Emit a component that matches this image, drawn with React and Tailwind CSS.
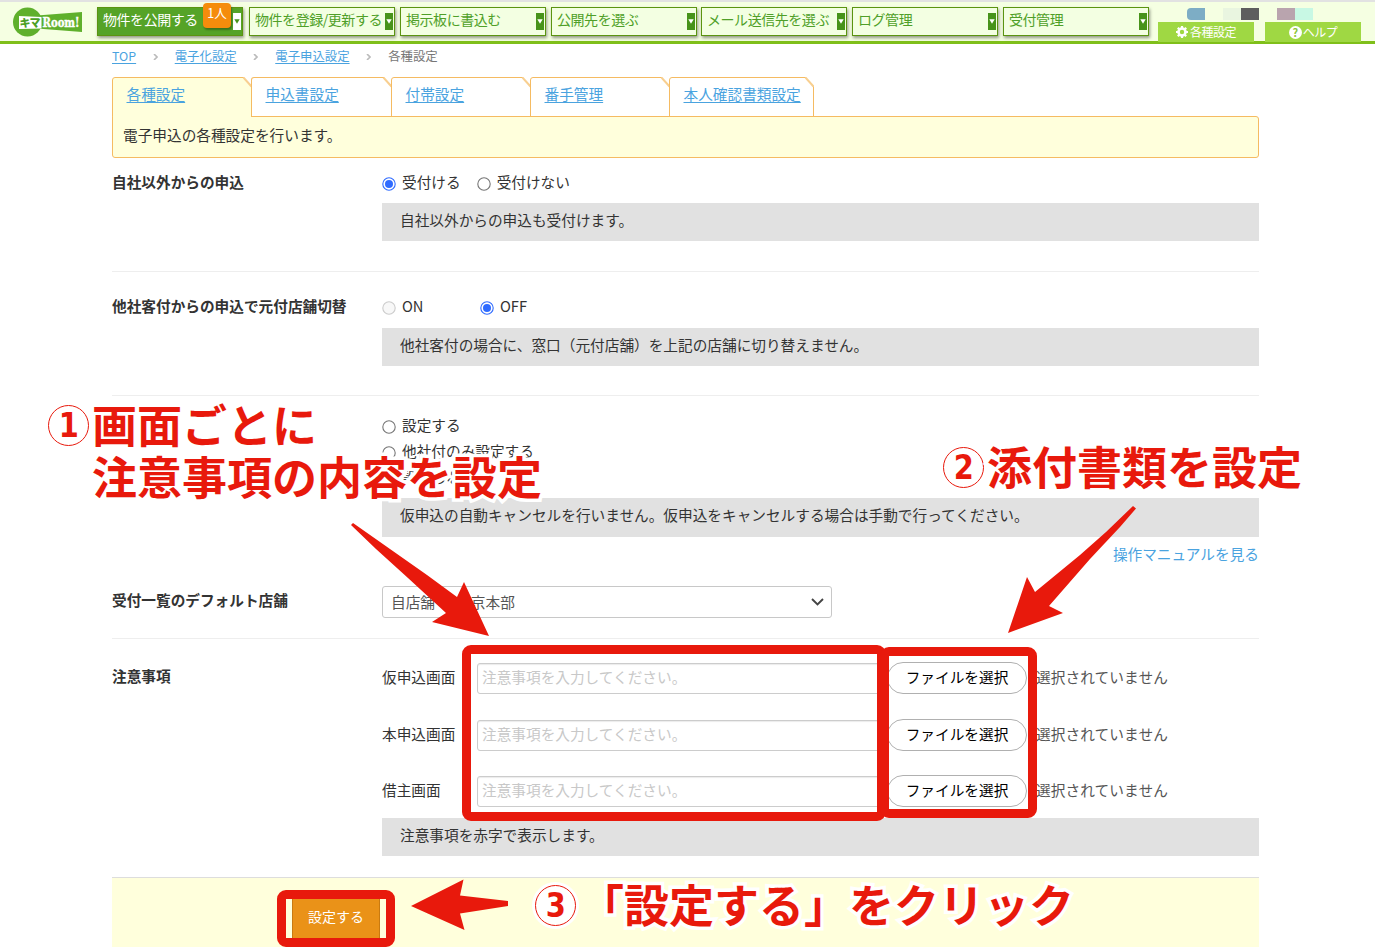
import React from "react";

const NAV = [
  { label: "物件を公開する", ml: "ml-[15px]", active: true },
  { label: "物件を登録/更新する", ml: "ml-[6px]" },
  { label: "掲示板に書込む", ml: "ml-[5px]" },
  { label: "公開先を選ぶ", ml: "ml-[5px]" },
  { label: "メール送信先を選ぶ", ml: "ml-[4px]" },
  { label: "ログ管理", ml: "ml-[5px]" },
  { label: "受付管理", ml: "ml-[5px]" },
];

function Logo() {
  return (
    <svg width="70" height="30" viewBox="0 0 70 30" className="block">
      <circle cx="14.500" cy="15" r="14.500" fill="#5fb02c" />
      <path d="M24 8.500 L69 5 V25 L24 21.500 Z" fill="#5fb02c" />
      <path d="M6 9 L28.500 10 V21.500 L6 22 Z" fill="#fff" />
      <text x="6.500" y="20" fontSize="11" fontWeight="900" fill="#4ba024" textLength="21" fontFamily="Noto Sans CJK JP, sans-serif">キマ</text>
      <text x="29.500" y="19.500" fontSize="12.500" fontWeight="700" fill="#fff" stroke="#fff" strokeWidth=".4" textLength="37" lengthAdjust="spacingAndGlyphs" fontFamily="DejaVu Serif, serif">Room!</text>
    </svg>
  );
}

function NavButton({ label, ml, active }) {
  return (
    <div
      className={
        "relative flex h-[29px] w-[146px] shrink-0 items-center border border-[#5b9410] pl-[5px] text-[14px] shadow-[1px_2px_3px_rgba(0,0,0,0.4)] " +
        ml +
        (active ? " bg-[#55a327] text-white" : " bg-[#f3ffe2] text-[#4f9f28]")
      }
    >
      <span className="-mt-[5px] grow whitespace-nowrap tracking-[-0.45px]">{label}</span>
      <span className={"mr-px flex h-[17px] w-[8px] shrink-0 items-center justify-center " + (active ? "bg-white" : "bg-[#47931a]")}>
        <svg width="6" height="5" viewBox="0 0 6 5">
          <path d="M.3 .3 H5.700 L3 4.700 Z" fill={active ? "#47931a" : "#fff"} />
        </svg>
      </span>
      {active && (
        <span className="absolute top-[-5px] left-[105px] flex h-[25px] w-[28px] items-center justify-center rounded-[4px] bg-[#f58c0c] pb-[4px] text-[12.5px] shadow-[1px_2px_2px_rgba(0,0,0,0.3)]">
          1人
        </span>
      )}
    </div>
  );
}

function Gear() {
  return (
    <svg width="12" height="12" viewBox="0 0 12 12">
      <circle cx="6" cy="6" r="3.500" fill="none" stroke="#fff" strokeWidth="2.600" />
      <g stroke="#fff" strokeWidth="2.200">
        <path d="M6 0V2M6 10V12M0 6H2M10 6H12M1.800 1.800L3 3M9 9L10.200 10.200M10.200 1.800L9 3M3 9L1.800 10.200" />
      </g>
    </svg>
  );
}

function Header() {
  return (
    <header className="flex h-[44px] border-t-2 border-b-[3px] border-t-[#e2e2e2] border-b-[#7fbf1a] bg-[#f5ffe2]">
      <div className="ml-[13px] w-[69px] shrink-0 pt-[5px]">
        <Logo />
      </div>
      <nav className="flex pt-[5px]">
        {NAV.map((n) => (
          <NavButton key={n.label} {...n} />
        ))}
      </nav>
      <div className="ml-[9px] flex gap-[11px]">
        <div className="w-[96px]">
          <div className="flex h-[20px] pt-[6px] pl-[29px]">
            <i className="h-[12px] w-[18px] shrink-0 rounded-l-[4px] bg-[#7dadc5]" />
            <i className="ml-[18px] h-[12px] w-[18px] shrink-0 bg-[#e9f5e0]" />
            <i className="h-[12px] w-[18px] shrink-0 bg-[#5e5e5e]" />
          </div>
          <div className="flex h-[20px] items-center justify-center gap-[2px] bg-[#9fd843] text-[12px] text-white">
            <Gear />
            <span className="tracking-[-0.5px]">各種設定</span>
          </div>
        </div>
        <div className="w-[96px]">
          <div className="flex h-[20px] pt-[6px] pl-[12px]">
            <i className="h-[12px] w-[18px] shrink-0 bg-[#b9a4ae]" />
            <i className="h-[12px] w-[18px] shrink-0 bg-[#c8f8e4]" />
          </div>
          <div className="flex h-[20px] items-center justify-center gap-px bg-[#9fd843] text-[12px] text-white">
            <span className="flex size-[13px] items-center justify-center rounded-full bg-white text-[11px] font-bold text-[#8cc63a]">?</span>
            <span className="tracking-[-0.5px]">ヘルプ</span>
          </div>
        </div>
      </div>
    </header>
  );
}

function Crumbs() {
  const sep = (
    <svg width="5" height="6" viewBox="0 0 5 6" className="mx-[16.8px]">
      <path d="M1 0 L4 3 L1 6" fill="none" stroke="#bbb" strokeWidth="1.600" />
    </svg>
  );
  const link = "text-[#4aa3df] underline underline-offset-2";
  return (
    <div className="flex h-[26px] items-center pb-px text-[12.4px]">
      <a className={link}>TOP</a>
      {sep}
      <a className={link}>電子化設定</a>
      {sep}
      <a className={link}>電子申込設定</a>
      {sep}
      <span className="text-[#777]">各種設定</span>
    </div>
  );
}

function Tab({ w, label, active }) {
  const wide = w === "w-[145px]";
  return (
    <div className={"relative h-[40px] shrink-0 " + w}>
      <svg className="absolute inset-0 h-full w-full" viewBox={wide ? "0 0 145 40" : "0 0 140 40"} preserveAspectRatio="none">
        <path
          d={wide ? "M.5 40 V3 Q.5 .5 3 .5 H136.500 L144.500 9.500 V40" : "M.5 40 V3 Q.5 .5 3 .5 H131.500 L139.500 9.500 V40"}
          fill={active ? "#ffffdc" : "#fff"}
          stroke="#f5bb62"
        />
        <path d={wide ? "M136.500 .5 L144.500 9.500" : "M131.500 .5 L139.500 9.500"} stroke="#f8cf90" strokeWidth="2" />
      </svg>
      <a className="relative block pt-[6px] pl-[14.500px] leading-[22px] text-[#4aa3df] underline underline-offset-2">{label}</a>
    </div>
  );
}

function Tabs() {
  return (
    <div className="mt-[7px]">
      <div className="flex">
        <Tab w="w-[140px]" label="各種設定" active />
        <div className="-ml-px flex">
          <Tab w="w-[141px]" label="申込書設定" />
        </div>
        <div className="-ml-px flex">
          <Tab w="w-[140px]" label="付帯設定" />
        </div>
        <div className="-ml-px flex">
          <Tab w="w-[140px]" label="番手管理" />
        </div>
        <div className="-ml-px flex">
          <Tab w="w-[145px]" label="本人確認書類設定" />
        </div>
      </div>
      <div className="relative -mt-px h-[42px] rounded-[3px] rounded-tl-none border border-[#f5bb62] bg-[#ffffdc] pt-[7px] pl-[10px] leading-[22px]">
        <i className="absolute -top-px left-0 h-px w-[138px] bg-[#ffffdc]" />
        電子申込の各種設定を行います。
      </div>
    </div>
  );
}

function Radio({ checked, disabled }) {
  return (
    <svg width="14" height="14" viewBox="0 0 14 14" className="mt-[3px] mr-[6px] shrink-0">
      <circle cx="7" cy="7" r="6.200" fill={disabled ? "#f8f8f8" : "#fff"} stroke={checked ? "#2f6bff" : disabled ? "#ccc" : "#767676"} strokeWidth="1.100" />
      {checked && <circle cx="7" cy="7" r="4" fill="#2f6bff" />}
    </svg>
  );
}

function Option({ label, checked, disabled, className = "" }) {
  return (
    <label className={"flex items-center " + className}>
      <Radio checked={checked} disabled={disabled} />
      <span>{label}</span>
    </label>
  );
}

function Note({ children, className }) {
  return <div className={"bg-[#e1e1e1] pl-[18px] " + className}>{children}</div>;
}

function Section({ title, className, children }) {
  return (
    <section className={"flex leading-[22px] " + className}>
      <h3 className="w-[270px] shrink-0 font-bold whitespace-nowrap">{title}</h3>
      <div className="w-[877px]">{children}</div>
    </section>
  );
}

function FileRow({ label, className = "" }) {
  return (
    <div className={"flex h-[32px] items-center " + className}>
      <span className="w-[95px] pb-[3px]">{label}</span>
      <div className="mt-px h-[31px] w-[406px] rounded-[3px] border border-[#ccc] pl-[4px] leading-[26px] text-[#c8c8c8] shadow-[inset_0_1px_1px_rgba(0,0,0,0.08)]">
        注意事項を入力してください。
      </div>
      <div className="ml-[4px] h-[32px] w-[140px] shrink-0 rounded-full border border-[#b0b0b0] text-center leading-[27px] text-black">
        ファイルを選択
      </div>
      <span className="ml-[9px] pb-[2px] tracking-[0.1px] text-[#555]">選択されていません</span>
    </div>
  );
}

function Callout({ number, className, children }) {
  return (
    <div
      className={
        "absolute flex items-center text-[45px] leading-[52px] font-bold whitespace-nowrap text-[#e8190c] [-webkit-text-stroke:7px_#fff] [paint-order:stroke_fill] " +
        className
      }
    >
      {number && (
        <span className="mt-[2px] mr-[3px] flex size-[41px] items-center justify-center rounded-full border-[1.500px] border-[#e8190c] bg-white font-['DejaVu_Sans',sans-serif] text-[34px] leading-none shadow-[0_0_0_3px_#fff] [-webkit-text-stroke:0px]">
          <span className="block scale-x-85">{number}</span>
        </span>
      )}
      {children}
    </div>
  );
}

function Annotations() {
  return (
    <div className="pointer-events-none absolute inset-0">
      <Callout number="1" className="top-[398px] left-[48px]">画面ごとに</Callout>
      <Callout className="top-[450px] left-[92px]">注意事項の内容を設定</Callout>
      <Callout number="2" className="top-[440px] left-[943px]">添付書類を設定</Callout>
      <Callout number="3" className="top-[878px] left-[535px]">「設定する」をクリック</Callout>
      <div className="absolute top-[645px] left-[462px] h-[176px] w-[424px] rounded-[9px] border-[9px] border-[#e8190c]" />
      <div className="absolute top-[647px] left-[880px] h-[171px] w-[157px] rounded-[9px] border-[9px] border-[#e8190c]" />
      <div className="absolute top-[890px] left-[277px] h-[57px] w-[118px] rounded-[9px] border-[9px] border-[#e8190c]" />
      <svg className="absolute inset-0" width="1375" height="947" viewBox="0 0 1375 947" fill="#e8190c">
        <path d="M353 523 L427 575 L457 597 L464 582 L489 636 L432 622 L446 613 L408 578 L376 549 L351 525 Z" />
        <path d="M1133 506 L1136 508.500 L1120 527 L1090 559 L1049 606 L1063 613 L1008 633 L1027 577 L1035 592 L1080 555 L1106 532 Z" />
        <path d="M411 906 L463.500 879.500 L460 895.500 L508 901 V906 L460 913.500 L464.500 930 Z" />
      </svg>
    </div>
  );
}

export default function App() {
  return (
    <div className="relative h-[947px] w-[1375px] overflow-hidden bg-white font-['Noto_Sans_CJK_JP',sans-serif] text-[14.67px] text-[#333]">
      <Header />
      <main className="ml-[112px] w-[1147px]">
        <Crumbs />
        <Tabs />
        <Section title="自社以外からの申込" className="h-[114px] border-b border-[#eee] pt-[13px]">
          <div className="flex">
            <Option label="受付ける" checked />
            <Option label="受付けない" className="ml-[16px]" />
          </div>
          <Note className="mt-[10px] h-[38px] leading-[34px]">自社以外からの申込も受付けます。</Note>
        </Section>
        <Section title="他社客付からの申込で元付店舗切替" className="h-[124px] border-b border-[#eee] pt-[23px]">
          <div className="flex">
            <Option label="ON" disabled className="w-[98px]" />
            <Option label="OFF" checked />
          </div>
          <Note className="mt-[11px] h-[38px] leading-[34px]">他社客付の場合に、窓口（元付店舗）を上記の店舗に切り替えません。</Note>
        </Section>
        <Section title="" className="h-[170px] pt-[16px]">
          <Option label="設定する" className="h-[26px]" />
          <Option label="他社付のみ設定する" className="h-[26px]" />
          <Option label="設定しない" checked className="h-[26px]" />
          <Note className="mt-[8px] h-[39px] leading-[34px]">仮申込の自動キャンセルを行いません。仮申込をキャンセルする場合は手動で行ってください。</Note>
          <a className="mt-[6px] block text-right text-[#4aa3df]">操作マニュアルを見る</a>
        </Section>
        <Section title="受付一覧のデフォルト店舗" className="h-[73px] border-b border-[#eee] pt-[23px]">
          <div className="-mt-[3px] flex h-[32px] w-[450px] items-center justify-between rounded-[3px] border border-[#c8c8c8] pr-[7px] pl-[8px] text-[#555]">
            <span>自店舗 ： 東京本部</span>
            <svg width="13" height="8" viewBox="0 0 13 8">
              <path d="M1 1 L6.500 6.500 L12 1" fill="none" stroke="#444" strokeWidth="1.900" />
            </svg>
          </div>
        </Section>
        <Section title="注意事項" className="h-[238px] pt-[26px]">
          <FileRow label="仮申込画面" className="-mt-[3px]" />
          <FileRow label="本申込画面" className="mt-[25px]" />
          <FileRow label="借主画面" className="mt-[24px]" />
          <Note className="mt-[11px] h-[38px] leading-[34px]">注意事項を赤字で表示します。</Note>
        </Section>
        <div className="h-[70px] border-t border-[#ddd] bg-[#ffffdc] pt-[20px] pl-[180px]">
          <div className="flex h-[42px] w-[88px] items-center justify-center border border-[#c97a10] bg-[#ea9218] pb-[6px] text-[14px] text-white">設定する</div>
        </div>
      </main>
      <Annotations />
    </div>
  );
}
